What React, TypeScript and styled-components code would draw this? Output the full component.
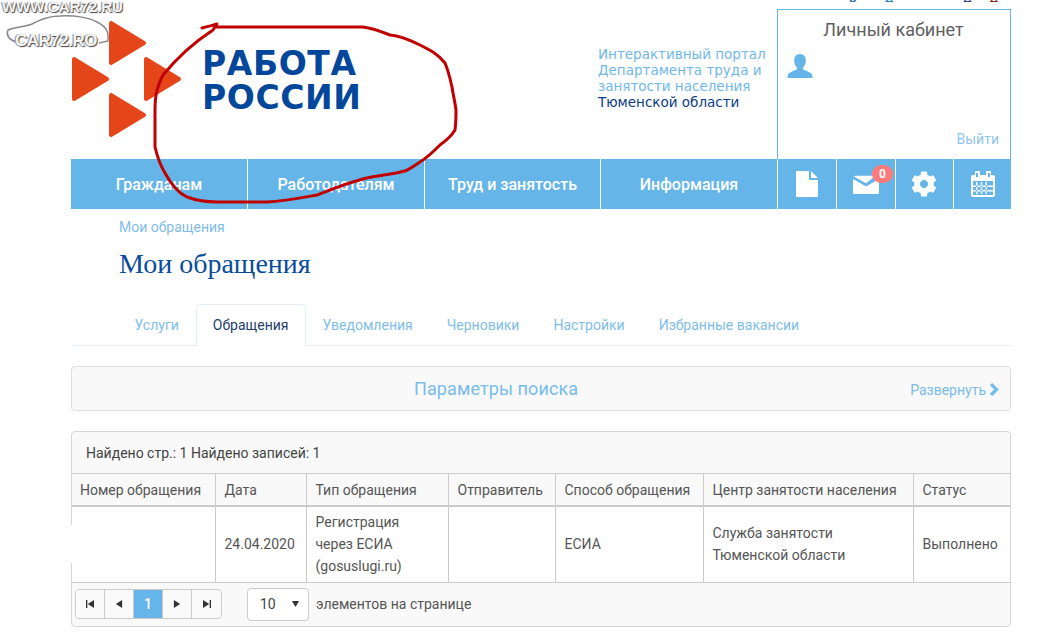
import styled, { createGlobalStyle } from 'styled-components';
import { FaCog } from 'react-icons/fa';

const GlobalStyle = createGlobalStyle`
  html, body {
    margin: 0;
    padding: 0;
    background: #fff;
    font-family: Roboto, "Liberation Sans", sans-serif;
  }
  * { box-sizing: border-box; }
`;

const Page = styled.div`
  position: relative;
  width: 1057px;
  height: 644px;
  overflow: hidden;
`;

const Wrapper = styled.div`
  width: 940px;
  margin-left: 71px;
`;

const Header = styled.header`
  display: grid;
  grid-template-columns: 527px 179px 234px;
  height: 159px;
`;

const Brand = styled.div`
  display: flex;
  align-items: flex-start;
`;

const BrandMark = styled.svg`
  width: 131px;
  height: 159px;
  flex: none;
`;

const BrandName = styled.div`
  margin-top: 47px;
  font-family: "DejaVu Sans", sans-serif;
  font-weight: 700;
  font-size: 33px;
  line-height: 34px;
  letter-spacing: 0.6px;
  color: #03479b;
`;

const Portal = styled.div`
  padding-top: 46px;
  font-family: "DejaVu Sans", sans-serif;
  font-size: 13.5px;
  line-height: 16px;
  color: #70b7ea;
`;

const PortalRegion = styled.span`
  display: block;
  color: #0b3c85;
`;

const Cabinet = styled.div`
  position: relative;
  display: flex;
  flex-direction: column;
  margin-top: 9px;
  padding: 9px 11px 0 9px;
  border: 1px solid #66b5e8;
  border-bottom: 0;
`;

const CabinetTitle = styled.div`
  padding-left: 1px;
  font-size: 18px;
  line-height: 21px;
  color: #5f5f5f;
  text-align: center;
`;

const UserIcon = styled.svg`
  width: 26px;
  height: 24px;
  margin-top: 14px;
  color: #66b5e8;
`;

const Logout = styled.a`
  margin-top: auto;
  margin-bottom: 11px;
  align-self: flex-end;
  font-size: 14px;
  line-height: 17px;
  color: #8fc6ee;
`;

const Nav = styled.nav`
  display: grid;
  grid-template-columns: 177px 177px 176px 177px 59px 59px 58px 57px;
  height: 50px;
  background: #66b5e8;
`;

const NavItem = styled.div<{ $last?: boolean }>`
  position: relative;
  display: flex;
  align-items: center;
  justify-content: center;
  font-size: 16px;
  font-weight: 500;
  color: #fff;
  border-right: ${p => (p.$last ? '0' : '1px solid #fff')};
`;

const NavIcon = styled.svg`
  width: 26px;
  height: 26px;
  fill: #fff;
`;

const GearIcon = styled(FaCog)`
  width: 26px;
  height: 26px;
  margin-right: 2px;
  fill: #fff;
`;

const Badge = styled.span`
  position: absolute;
  top: 6px;
  right: 2px;
  width: 21px;
  height: 18px;
  border-radius: 9px;
  background: #ff7b7b;
  color: #fff;
  font-size: 12px;
  font-weight: 700;
  line-height: 18px;
  text-align: center;
`;

const Crumb = styled.div`
  padding: 10px 0 0 48px;
  font-size: 14px;
  line-height: 17px;
  color: #80bdea;
`;

const Title = styled.h1`
  margin: 13px 0 0 48px;
  font-family: "Liberation Serif", serif;
  font-size: 28px;
  font-weight: 400;
  line-height: 30px;
  color: #0a4c9c;
`;

const Tabs = styled.div`
  display: flex;
  height: 42px;
  margin-top: 25px;
  padding-left: 46.5px;
  border-bottom: 1px solid #e3eff8;
`;

const Tab = styled.div<{ $active?: boolean }>`
  height: 42px;
  padding: 12px 16px 0;
  font-size: 14px;
  line-height: 16px;
  color: ${p => (p.$active ? '#24406f' : '#80bdea')};
  background: ${p => (p.$active ? '#fff' : 'transparent')};
  border: 1px solid ${p => (p.$active ? '#e3eff8' : 'transparent')};
  border-bottom: 0;
  border-radius: 4px 4px 0 0;
`;

const SearchPanel = styled.div`
  display: flex;
  align-items: center;
  height: 45px;
  margin-top: 20px;
  padding: 0 11px 0 10px;
  background: #f9f9f9;
  border: 1px solid #ddd;
  border-radius: 4px;
`;

const SearchTitle = styled.div`
  flex: 1;
  font-size: 18px;
  font-weight: 400;
  letter-spacing: 0.1px;
  text-align: center;
  color: #78bcec;
`;

const Expand = styled.a`
  display: flex;
  align-items: center;
  gap: 3px;
  padding-top: 2px;
  font-size: 14px;
  color: #78bcec;
`;

const ExpandArrow = styled.svg`
  width: 10px;
  height: 13px;
  fill: none;
  stroke: #78bcec;
  stroke-width: 3.4;
`;

const ResultPanel = styled.div`
  position: relative;
  height: 196px;
  margin-top: 20px;
  background: #f9f9f9;
  border: 1px solid #d5d5d5;
  border-radius: 4px;
`;

const FoundRow = styled.div`
  height: 41px;
  padding: 13px 14px 0;
  font-size: 14px;
  line-height: 17px;
  color: #444;
`;

const Grid = styled.table`
  width: 938px;
  table-layout: fixed;
  border-collapse: collapse;
  font-size: 14px;
  color: #555;
`;

const HeadCell = styled.th`
  height: 32px;
  padding: 2px 8px 0 9px;
  font-weight: 400;
  text-align: left;
  background: #f9f9f9;
  border: 1px solid #ccc;
  border-bottom: 2px solid #ccc;
  &:first-child { padding-left: 8px; border-left: 0; }
  &:last-child { border-right: 0; }
`;

const Cell = styled.td`
  height: 77px;
  padding: 0 8px 0 9px;
  line-height: 22px;
  background: #fff;
  border: 1px solid #ccc;
  &:first-child { border-left: 0; }
  &:last-child { border-right: 0; }
`;

const Redaction = styled.span`
  position: absolute;
  left: -2px;
  top: 93px;
  width: 6px;
  height: 38px;
  background: #fff;
`;

const Pager = styled.div`
  display: flex;
  align-items: center;
  height: 42px;
  padding-left: 3px;
`;

const PagerButtons = styled.div`
  display: flex;
  height: 30px;
  border: 1px solid #ccc;
  border-radius: 4px;
  overflow: hidden;
`;

const PagerButton = styled.div<{ $current?: boolean }>`
  display: flex;
  align-items: center;
  justify-content: center;
  width: 29px;
  font-size: 14px;
  font-weight: 500;
  color: #fff;
  background: ${p => (p.$current ? '#66b5e8' : '#fafafa')};
  border-right: 1px solid #ccc;
  &:last-child { border-right: 0; }
  svg { width: 8px; height: 8px; fill: #333; }
`;

const PageSize = styled.div`
  display: flex;
  align-items: center;
  justify-content: space-between;
  width: 62px;
  height: 33px;
  margin-left: 25px;
  padding: 0 9px 0 12px;
  font-size: 14px;
  color: #444;
  background: #fff;
  border: 1px solid #ccc;
  border-radius: 4px;
  svg { width: 7px; height: 6px; fill: #333; }
`;

const PageSizeLabel = styled.span`
  margin-left: 7px;
  font-size: 14px;
  color: #555;
`;

const TopClip = styled.div`
  position: absolute;
  top: 0;
  left: 845px;
  display: flex;
  height: 2px;
  overflow: hidden;
  font-family: Roboto, sans-serif;
  font-size: 14px;
`;

const TopLetter = styled.span<{ $color: string; $gap: number }>`
  margin-top: -11px;
  margin-left: ${p => p.$gap}px;
  line-height: 16px;
  color: ${p => p.$color};
`;

const Scribble = styled.svg`
  position: absolute;
  top: 0;
  left: 0;
  width: 1057px;
  height: 644px;
  pointer-events: none;
`;

const WatermarkCar = styled.svg`
  position: absolute;
  top: 0;
  left: 0;
  width: 110px;
  height: 50px;
  fill: none;
`;

const WatermarkTop = styled.div`
  position: absolute;
  top: -1px;
  left: 2px;
  font-family: "Liberation Sans", sans-serif;
  font-size: 15px;
  font-weight: 700;
  line-height: 16px;
  color: #f4f4f4;
  text-shadow: 1px 1px 1px #444, -1px 0 1px #888;
`;

const WatermarkBottom = styled(WatermarkTop)`
  top: 33px;
  left: 15px;
  font-size: 17px;
  letter-spacing: -0.5px;
`;

const columns = [143, 91, 142, 107, 148, 210, 97];
const headers = [
  'Номер обращения',
  'Дата',
  'Тип обращения',
  'Отправитель',
  'Способ обращения',
  'Центр занятости населения',
  'Статус',
];

export default function App() {
  return (
    <Page>
      <GlobalStyle />
      <Wrapper>
        <Header>
          <Brand>
            <BrandMark viewBox="0 0 131 159">
              <g fill="#e4461a" stroke="#e4461a" strokeWidth="4" strokeLinejoin="round">
                <polygon points="40,23 73,43 40,63" />
                <polygon points="3,59 36,79 3,99" />
                <polygon points="75,59 108,79 75,99" />
                <polygon points="40,95 73,115 40,135" />
              </g>
            </BrandMark>
            <BrandName>
              РАБОТА
              <br />
              РОССИИ
            </BrandName>
          </Brand>
          <Portal>
            Интерактивный портал
            <br />
            Департамента труда и
            <br />
            занятости населения
            <PortalRegion>Тюменской области</PortalRegion>
          </Portal>
          <Cabinet>
            <CabinetTitle>Личный кабинет</CabinetTitle>
            <UserIcon viewBox="0 0 27 26" fill="currentColor">
              <path d="M13.5 0c4 0 6.300 3 6.300 7 0 3-1 5.500-2.800 7.300v2.400c3 1.500 8.500 3 9.500 5.300.5 1.300.5 2.700.5 4H0c0-1.300 0-2.700.5-4 1-2.300 6.500-3.800 9.500-5.300v-2.400C8.200 12.500 7.200 10 7.200 7c0-4 2.300-7 6.300-7z" />
            </UserIcon>
            <Logout>Выйти</Logout>
          </Cabinet>
        </Header>
        <Nav>
          <NavItem>Гражданам</NavItem>
          <NavItem>Работодателям</NavItem>
          <NavItem>Труд и занятость</NavItem>
          <NavItem>Информация</NavItem>
          <NavItem>
            <NavIcon viewBox="0 0 26 26">
              <path d="M2 0h13v9h9v16c0 .5-.4 1-1 1H3c-.6 0-1-.5-1-1V0z M17 0l7 7h-7z" />
            </NavIcon>
          </NavItem>
          <NavItem>
            <NavIcon viewBox="0 0 26 26">
              <path d="M1 5.500c0-.5.400-.8.800-.8h20.800L13 12.300 1 5.500z M0 8l13 7.500L26 8v14c0 .6-.4 1-1 1H1c-.6 0-1-.4-1-1V8z" />
            </NavIcon>
            <Badge>0</Badge>
          </NavItem>
          <NavItem>
            <GearIcon />
          </NavItem>
          <NavItem $last>
            <NavIcon viewBox="0 0 26 26">
              <path
                fillRule="evenodd"
                d="M6 0h3c.6 0 1 .4 1 1v3h6V1c0-.6.400-1 1-1h3c.6 0 1 .4 1 1v3h2c1.100 0 2 .9 2 2v18c0 1.100-.9 2-2 2H3c-1.100 0-2-.9-2-2V6c0-1.100.9-2 2-2h2V1c0-.6.400-1 1-1z M3 10v14h20V10z M6 2v4h2V2z M18 2v4h2V2z M6 11h1.500v12H6z M10.800 11h1.500v12h-1.500z M15.500 11H17v12h-1.500z M3 14.500h20V16H3z M3 19h20v1.500H3z"
              />
            </NavIcon>
          </NavItem>
        </Nav>
        <Crumb>Мои обращения</Crumb>
        <Title>Мои обращения</Title>
        <Tabs>
          <Tab>Услуги</Tab>
          <Tab $active>Обращения</Tab>
          <Tab>Уведомления</Tab>
          <Tab>Черновики</Tab>
          <Tab>Настройки</Tab>
          <Tab>Избранные вакансии</Tab>
        </Tabs>
        <SearchPanel>
          <SearchTitle>Параметры поиска</SearchTitle>
          <Expand>
            Развернуть
            <ExpandArrow viewBox="0 0 10 13">
              <path d="M2 1l5.500 5.500L2 12" />
            </ExpandArrow>
          </Expand>
        </SearchPanel>
        <ResultPanel>
          <FoundRow>Найдено стр.: 1 Найдено записей: 1</FoundRow>
          <Grid>
            <colgroup>
              {columns.map((width, i) => (
                <col key={i} style={{ width }} />
              ))}
            </colgroup>
            <thead>
              <tr>
                {headers.map(text => (
                  <HeadCell key={text}>{text}</HeadCell>
                ))}
              </tr>
            </thead>
            <tbody>
              <tr>
                <Cell />
                <Cell>24.04.2020</Cell>
                <Cell>
                  Регистрация
                  <br />
                  через ЕСИА
                  <br />
                  (gosuslugi.ru)
                </Cell>
                <Cell />
                <Cell>ЕСИА</Cell>
                <Cell>
                  Служба занятости
                  <br />
                  Тюменской области
                </Cell>
                <Cell>Выполнено</Cell>
              </tr>
            </tbody>
          </Grid>
          <Redaction />
          <Pager>
            <PagerButtons>
              <PagerButton>
                <svg viewBox="0 0 9 9"><path d="M0 0h1.500v9H0z M9 0v9L2 4.500z" /></svg>
              </PagerButton>
              <PagerButton>
                <svg viewBox="0 0 9 9"><path d="M8 0v9L1 4.500z" /></svg>
              </PagerButton>
              <PagerButton $current>1</PagerButton>
              <PagerButton>
                <svg viewBox="0 0 9 9"><path d="M1 0v9l7-4.500z" /></svg>
              </PagerButton>
              <PagerButton>
                <svg viewBox="0 0 9 9"><path d="M7.500 0H9v9H7.500z M0 0v9l7-4.500z" /></svg>
              </PagerButton>
            </PagerButtons>
            <PageSize>
              10
              <svg viewBox="0 0 7 6"><path d="M0 0h7L3.500 6z" /></svg>
            </PageSize>
            <PageSizeLabel>элементов на странице</PageSizeLabel>
          </Pager>
        </ResultPanel>
      </Wrapper>

      <TopClip>
        <TopLetter $color="#1d5a9e" $gap={4}>р</TopLetter>
        <TopLetter $color="#2a7fc0" $gap={28}>д</TopLetter>
        <TopLetter $color="#334a8a" $gap={70}>д</TopLetter>
        <TopLetter $color="#8a2a2a" $gap={18}>д</TopLetter>
      </TopClip>

      <Scribble viewBox="0 0 1057 644" fill="none">
        <path
          d="M202 28C208 26 212 26 217 24L213 30C190 45 172 64 163 75C157 87 155 95 155 110L155 147C158 160 162 168 165 173C172 186 178 193 187 197C198 201 206 202 217 202L267 202C285 201 300 198 317 195C335 188 350 182 367 178C380 175 395 174 405 171C412 168 418 163 423 160C430 155 435 150 440 145C447 140 452 135 455 130C456 122 456 116 456 110C455 102 453 94 452 87C450 78 448 70 445 63C438 54 430 50 420 45C410 40 400 36 390 35C380 31 372 28 363 27L217 27"
          stroke="#c00000"
          strokeWidth="3"
          strokeLinejoin="round"
          strokeLinecap="round"
        />
      </Scribble>

      <WatermarkCar viewBox="0 0 110 50">
        <path
          d="M17 42C8 40 6 34 8 30C14 27 24 27 32 24C40 20 48 16 60 16C75 15 90 18 97 22C105 26 109 30 108 41L99 43"
          stroke="#888"
          strokeWidth="1.500"
        />
      </WatermarkCar>
      <WatermarkTop>WWW.CAR72.RU</WatermarkTop>
      <WatermarkBottom>CAR72.RO</WatermarkBottom>
    </Page>
  );
}
